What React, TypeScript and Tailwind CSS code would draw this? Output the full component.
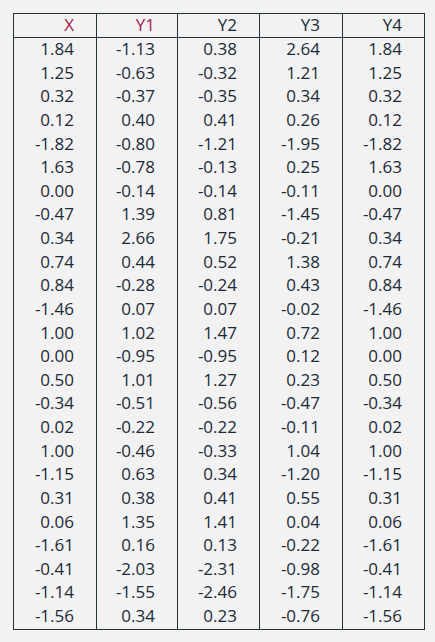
import React from "react";

const rows: string[][] = [
  ["1.84", "-1.13", "0.38", "2.64", "1.84"],
  ["1.25", "-0.63", "-0.32", "1.21", "1.25"],
  ["0.32", "-0.37", "-0.35", "0.34", "0.32"],
  ["0.12", "0.40", "0.41", "0.26", "0.12"],
  ["-1.82", "-0.80", "-1.21", "-1.95", "-1.82"],
  ["1.63", "-0.78", "-0.13", "0.25", "1.63"],
  ["0.00", "-0.14", "-0.14", "-0.11", "0.00"],
  ["-0.47", "1.39", "0.81", "-1.45", "-0.47"],
  ["0.34", "2.66", "1.75", "-0.21", "0.34"],
  ["0.74", "0.44", "0.52", "1.38", "0.74"],
  ["0.84", "-0.28", "-0.24", "0.43", "0.84"],
  ["-1.46", "0.07", "0.07", "-0.02", "-1.46"],
  ["1.00", "1.02", "1.47", "0.72", "1.00"],
  ["0.00", "-0.95", "-0.95", "0.12", "0.00"],
  ["0.50", "1.01", "1.27", "0.23", "0.50"],
  ["-0.34", "-0.51", "-0.56", "-0.47", "-0.34"],
  ["0.02", "-0.22", "-0.22", "-0.11", "0.02"],
  ["1.00", "-0.46", "-0.33", "1.04", "1.00"],
  ["-1.15", "0.63", "0.34", "-1.20", "-1.15"],
  ["0.31", "0.38", "0.41", "0.55", "0.31"],
  ["0.06", "1.35", "1.41", "0.04", "0.06"],
  ["-1.61", "0.16", "0.13", "-0.22", "-1.61"],
  ["-0.41", "-2.03", "-2.31", "-0.98", "-0.41"],
  ["-1.14", "-1.55", "-2.46", "-1.75", "-1.14"],
  ["-1.56", "0.34", "0.23", "-0.76", "-1.56"],
];

const headers = [
  { label: "X", red: true },
  { label: "Y1", red: true },
  { label: "Y2", red: false },
  { label: "Y3", red: false },
  { label: "Y4", red: false },
];

const grid = "grid grid-cols-[82px_81px_82px_83px_82px]";

export default function App() {
  return (
    <div
      className="min-h-[642px] w-[435px] bg-[#f2f2f2] pl-[13px] pt-[13px] text-[17px] text-[#1c2a38]"
      style={{ fontFamily: '"Open Sans", "Noto Sans", sans-serif' }}
    >
      <div className="w-[412px] border border-[#233139]">
        <div className={`${grid} border-b border-[#233139]`}>
          {headers.map((h, i) => (
            <div
              key={h.label}
              className={`h-[23px] pr-[22px] text-right leading-[22px] ${i > 0 ? "border-l border-[#233139]" : ""} ${h.red ? "text-[#a31d4a]" : ""}`}
            >
              {h.label}
            </div>
          ))}
        </div>
        {rows.map((r, ri) => (
          <div key={ri} className={grid}>
            {r.map((v, ci) => (
              <div
                key={ci}
                className={`h-[23.64px] pr-[22px] text-right leading-[22.5px] ${ci > 0 ? "border-l border-[#233139]" : ""}`}
              >
                {v}
              </div>
            ))}
          </div>
        ))}
      </div>
    </div>
  );
}
